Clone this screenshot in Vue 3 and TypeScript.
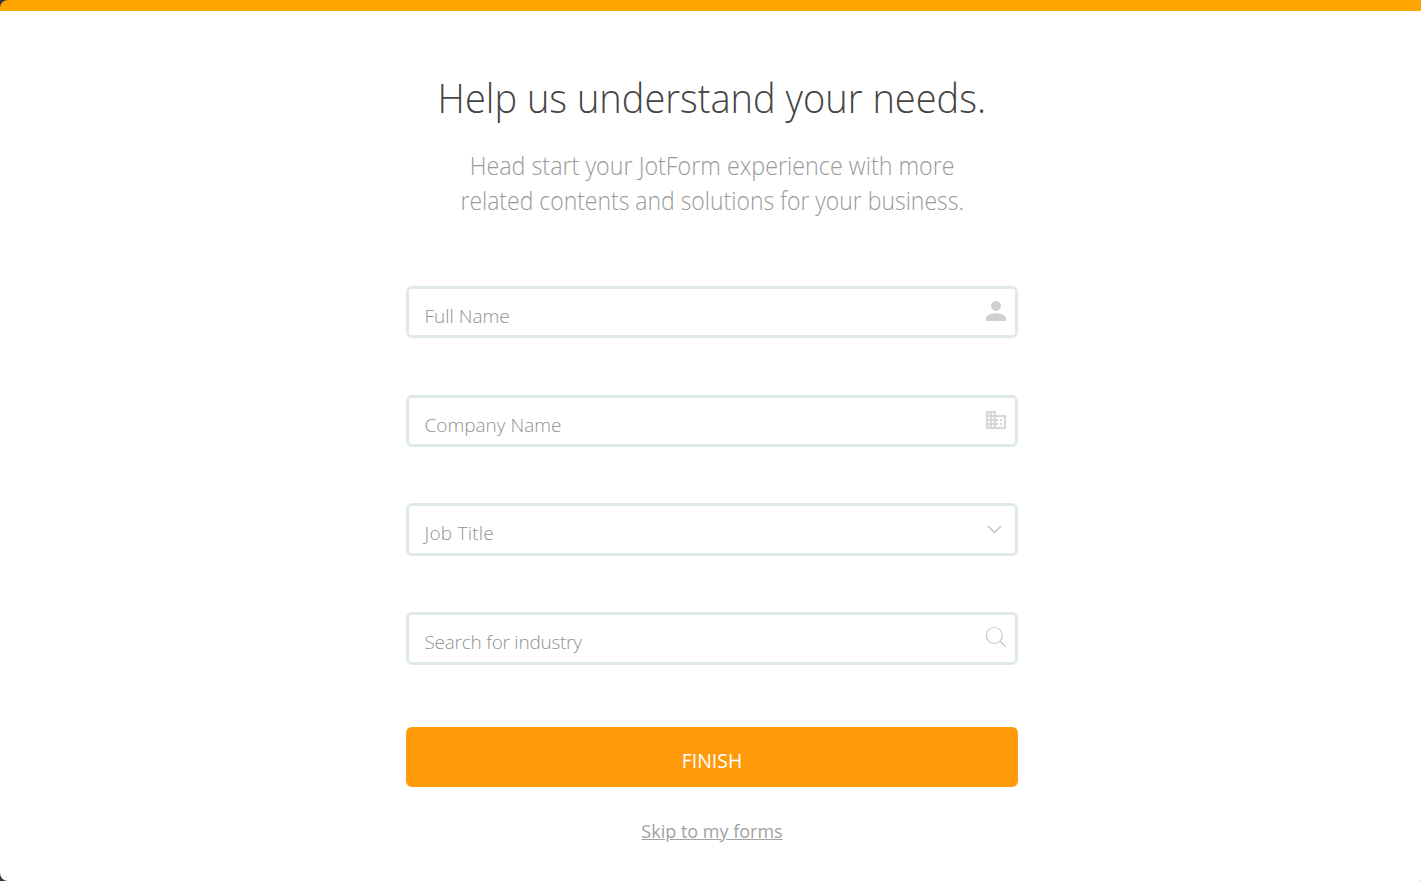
<script setup lang="ts">
interface Field {
  id: string
  placeholder: string
  icon: 'person' | 'company' | 'chevron' | 'search'
}

const fields: Field[] = [
  { id: 'name', placeholder: 'Full Name', icon: 'person' },
  { id: 'company', placeholder: 'Company Name', icon: 'company' },
  { id: 'job', placeholder: 'Job Title', icon: 'chevron' },
  { id: 'industry', placeholder: 'Search for industry', icon: 'search' },
]
</script>

<template>
  <div class="backdrop">
    <main class="panel">
      <form class="form" @submit.prevent>
        <h1 class="title">Help us understand your needs.</h1>
        <p class="subtitle">
          <span class="line first">Head start your JotForm experience with more</span>
          <span class="line second">related contents and solutions for your business.</span>
        </p>
        <div class="fields">
          <label v-for="field in fields" :key="field.id" class="field">
            <span class="placeholder" :class="field.id">{{ field.placeholder }}</span>
            <svg v-if="field.icon === 'person'" class="icon" viewBox="0 0 24 24">
              <path fill="#d0d0d0" d="M12 12a5 5 0 1 0 0-10 5 5 0 0 0 0 10zm0 2.200c-3.500 0-10 1.700-10 5.100V22h20v-2.700c0-3.400-6.500-5.100-10-5.100z" />
            </svg>
            <svg v-else-if="field.icon === 'company'" class="icon" viewBox="0 0 24 24">
              <path fill="#d6d6d6" stroke="#e4e4e4" stroke-width="0.300" d="M12 7V3H2v18h20V7H12zM6 19H4v-2h2v2zm0-4H4v-2h2v2zm0-4H4V9h2v2zm0-4H4V5h2v2zm4 12H8v-2h2v2zm0-4H8v-2h2v2zm0-4H8V9h2v2zm0-4H8V5h2v2zm10 12h-8v-2h2v-2h-2v-2h2v-2h-2V9h8v10zm-2-8h-2v2h2v-2zm0 4h-2v2h2v-2z" />
            </svg>
            <svg v-else-if="field.icon === 'chevron'" class="icon" viewBox="0 0 24 24">
              <path fill="none" stroke="#cacaca" stroke-width="1.700" d="M4 10l6.500 6.500L17 10" />
            </svg>
            <svg v-else class="icon" viewBox="0 0 24 24">
              <circle cx="10.300" cy="10.500" r="8" fill="none" stroke="#cccccc" stroke-width="1.200" />
              <path fill="none" stroke="#c8c8c8" stroke-width="1.400" d="M16 16.200l5.700 5.500" />
            </svg>
          </label>
        </div>
        <button class="finish" type="submit">FINISH</button>
        <a class="skip" href="#">Skip to my forms</a>
      </form>
    </main>
  </div>
</template>

<style>
body {
  margin: 0;
  overflow: hidden;
}
</style>

<style scoped>
.backdrop {
  height: 100vh;
  background: #35353f;
  font-family: "Open Sans", "Noto Sans", sans-serif;
  font-weight: 300;
}
.panel {
  box-sizing: border-box;
  height: 100%;
  border-top: 11px solid #ffa500;
  border-radius: 8px 1px 1px 8px;
  background: #fff;
  overflow: hidden;
}
.form {
  display: flex;
  flex-direction: column;
  align-items: center;
  width: 612px;
  margin-left: 406px;
  padding-top: 55.500px;
}
.title {
  margin: 0;
  font-size: 41px;
  line-height: 60px;
  font-weight: 300;
  color: #444;
  white-space: nowrap;
  transform: scaleX(0.927);
}
.subtitle {
  display: flex;
  flex-direction: column;
  align-items: center;
  margin: 21.500px 0 0;
  font-size: 25px;
  line-height: 35px;
  color: #999;
  white-space: nowrap;
}
.first {
  transform: scaleX(0.932);
}
.second {
  transform: scaleX(0.918);
}
.fields {
  display: flex;
  flex-direction: column;
  gap: 56.240px;
  width: 100%;
  margin-top: 68.050px;
}
.field {
  box-sizing: border-box;
  display: flex;
  align-items: center;
  justify-content: space-between;
  height: 52.440px;
  padding: 0 7px 0 15.500px;
  border: 3px solid #dfe9eb;
  border-radius: 6px;
}
.placeholder {
  padding-top: 7.500px;
  font-size: 19px;
  line-height: 28px;
  color: #929292;
  white-space: nowrap;
}
.placeholder.job {
  letter-spacing: 0.220px;
}
.placeholder.industry {
  letter-spacing: -0.250px;
}
.icon {
  width: 24px;
  height: 24px;
  margin-bottom: 2.600px;
}
.finish {
  box-sizing: border-box;
  width: 100%;
  height: 60px;
  margin-top: 62.400px;
  padding: 8px 0 0;
  border: 0;
  border-radius: 6px;
  background: #ff9b0b;
  color: #fff;
  font: 400 19.400px/28px "Open Sans", "Noto Sans", sans-serif;
}
.skip {
  margin-top: 30px;
  font-size: 18px;
  line-height: 28px;
  font-weight: 400;
  color: #a2a2a2;
  text-decoration: underline;
}
</style>
